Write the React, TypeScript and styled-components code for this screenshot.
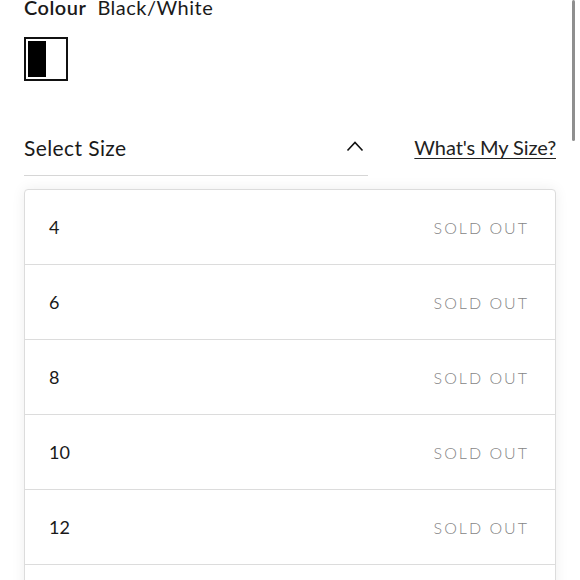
import React from 'react';
import styled, { createGlobalStyle } from 'styled-components';

const GlobalStyle = createGlobalStyle`
  html, body {
    margin: 0;
    padding: 0;
    background: #fff;
    font-family: Lato, "Noto Sans", Arial, sans-serif;
    color: #1a1a1a;
  }
`;

const Page = styled.div`
  position: relative;
  width: 580px;
  height: 580px;
  overflow: hidden;
  box-sizing: border-box;
  padding: 0 24px;
`;

const Scrollbar = styled.div`
  position: absolute;
  top: 0;
  right: 5px;
  width: 3px;
  height: 141px;
  border-radius: 2px;
  background: #8f8f8f;
`;

const ColourRow = styled.div`
  display: flex;
  gap: 11px;
  margin-top: -5px;
  font-size: 20px;
  line-height: 24px;
  letter-spacing: 0.5px;
`;

const ColourLabel = styled.span`
  font-weight: 600;
`;

const Swatch = styled.div`
  margin-top: 18px;
  width: 44px;
  height: 44px;
  box-sizing: border-box;
  border: 2px solid #111;
  padding: 2px;
  display: flex;
`;

const SwatchFill = styled.div`
  width: 18px;
  background: #000;
`;

const SizeRow = styled.div`
  margin-top: 40px;
  display: flex;
  align-items: flex-start;
`;

const SelectBox = styled.div`
  width: 344px;
  height: 55px;
  box-sizing: border-box;
  padding-top: 14px;
  border-bottom: 1px solid #d6d6d6;
  display: flex;
  justify-content: space-between;
  font-size: 21px;
  line-height: 25px;
  letter-spacing: 0.4px;
`;

const Chevron = styled.svg`
  margin-top: 5px;
  margin-right: 4px;
`;

const SizeLink = styled.a`
  margin-left: auto;
  margin-top: 14px;
  font-size: 20px;
  line-height: 25px;
  color: #222;
  text-decoration: underline;
  text-decoration-thickness: 1px;
  text-underline-offset: 3px;
  letter-spacing: -0.1px;
`;

const List = styled.div`
  margin-top: 13px;
  border: 1px solid #dcdcdc;
  border-radius: 4px;
  box-shadow: 0 0 14px rgba(0, 0, 0, 0.07);
  background: #fff;
`;

const Option = styled.div`
  height: 75px;
  box-sizing: border-box;
  display: flex;
  align-items: center;
  justify-content: space-between;
  padding: 0 26px 0 24px;
  border-bottom: 1px solid #dcdcdc;
  font-size: 18px;
`;

const SoldOut = styled.span`
  color: #858585;
  font-size: 16px;
  font-weight: 300;
  letter-spacing: 2px;
`;

const sizes = ['4', '6', '8', '10', '12', '14'];

export default function App() {
  return (
    <Page>
      <GlobalStyle />
      <ColourRow>
        <ColourLabel>Colour</ColourLabel>
        <span>Black/White</span>
      </ColourRow>
      <Swatch>
        <SwatchFill />
      </Swatch>
      <SizeRow>
        <SelectBox>
          <span>Select Size</span>
          <Chevron width="18" height="12" viewBox="0 0 18 12">
            <path d="M1.5 10.5 L9 2.5 L16.5 10.5" fill="none" stroke="#111" strokeWidth="1.6" />
          </Chevron>
        </SelectBox>
        <SizeLink>What's My Size?</SizeLink>
      </SizeRow>
      <List>
        {sizes.map((s) => (
          <Option key={s}>
            <span>{s}</span>
            <SoldOut>SOLD OUT</SoldOut>
          </Option>
        ))}
      </List>
      <Scrollbar />
    </Page>
  );
}
